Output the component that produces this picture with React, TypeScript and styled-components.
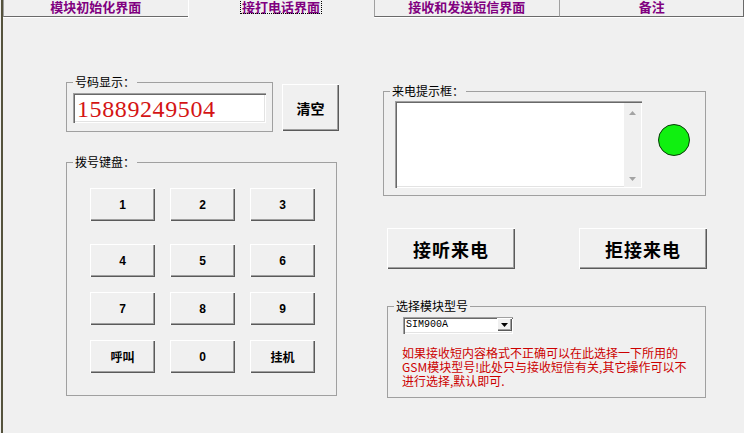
import styled, { createGlobalStyle } from "styled-components";

const tabs = [
  { id: 1, label: "模块初始化界面", width: 185 },
  { id: 2, label: "接打电话界面", width: 186, active: true },
  { id: 3, label: "接收和发送短信界面", width: 186 },
  { id: 4, label: "备注", width: 184 },
];

const keyRows = [
  { gap: 0, keys: ["1", "2", "3"] },
  { gap: 23, keys: ["4", "5", "6"] },
  { gap: 15, keys: ["7", "8", "9"] },
  { gap: 15, keys: ["呼叫", "0", "挂机"] },
];

const noteLines = [
  "如果接收短内容格式不正确可以在此选择一下所用的",
  "GSM模块型号!此处只与接收短信有关,其它操作可以不",
  "进行选择,默认即可.",
];

const App = () => {
  return (
    <>
      <GlobalStyle />
      <Page>
        <TabBar>
          {tabs.map((tab) => (
            <Tab key={tab.id} $width={tab.width} $active={!!tab.active}>
              <TabLabel $active={!!tab.active}>{tab.label}</TabLabel>
            </Tab>
          ))}
        </TabBar>
        <Panel>
          <LeftColumn>
            <NumberRow>
              <Group $width={207}>
                <Legend>号码显示：</Legend>
                <GroupBody $pad="4px 0 8px 6px">
                  <NumberField>15889249504</NumberField>
                </GroupBody>
              </Group>
              <ClearButton>清空</ClearButton>
            </NumberRow>
            <Group $width={271} $top={23}>
              <Legend>拨号键盘：</Legend>
              <GroupBody $pad="19px 0 22px 23px">
                {keyRows.map((row, i) => (
                  <KeyRow key={i} $gap={row.gap}>
                    {row.keys.map((k) => (
                      <KeyButton key={k}>{k}</KeyButton>
                    ))}
                  </KeyRow>
                ))}
              </GroupBody>
            </Group>
          </LeftColumn>
          <RightColumn>
            <Group $width={323}>
              <Legend>来电提示框：</Legend>
              <GroupBody $pad="3px 0 7px 11px">
                <CallerRow>
                  <CallerBox>
                    <CallerText />
                    <ScrollTrack>
                      <Arrow viewBox="0 0 7 4">
                        <path d="M0 4 L3.5 0 L7 4 Z" />
                      </Arrow>
                      <Arrow viewBox="0 0 7 4">
                        <path d="M0 0 L3.5 4 L7 0 Z" />
                      </Arrow>
                    </ScrollTrack>
                  </CallerBox>
                  <StatusLamp />
                </CallerRow>
              </GroupBody>
            </Group>
            <CallButtons>
              <CallButton>接听来电</CallButton>
              <CallButton>拒接来电</CallButton>
            </CallButtons>
            <Group $width={319} $top={30} $left={4}>
              <Legend>选择模块型号</Legend>
              <GroupBody $pad="4px 0 9px 15px">
                <ModelSelect>
                  <SelectValue>SIM900A</SelectValue>
                  <DropButton>
                    <svg width="7" height="4" viewBox="0 0 7 4">
                      <path d="M0 0 L3.5 4 L7 0 Z" fill="#000" />
                    </svg>
                  </DropButton>
                </ModelSelect>
                <Note>
                  {noteLines.map((line) => (
                    <NoteLine key={line}>{line}</NoteLine>
                  ))}
                </Note>
              </GroupBody>
            </Group>
          </RightColumn>
        </Panel>
      </Page>
    </>
  );
};

export default App;

// Styled Components
const GlobalStyle = createGlobalStyle`
  html, body {
    margin: 0;
    padding: 0;
    background: #f0f0f0;
  }
`;

const cjk = `"Noto Sans CJK SC", "Noto Sans", sans-serif`;

const Page = styled.div`
  width: 743px;
  height: 433px;
  margin-left: 1px;
  box-sizing: border-box;
  border-left: 2px solid #55533d;
  background: #f0f0f0;
  display: flex;
  flex-direction: column;
  overflow: hidden;
  font-family: ${cjk};
  color: #000;
`;

const TabBar = styled.div`
  display: flex;
  height: 17px;
  padding-left: 1px;
`;

const Tab = styled.div<{ $width: number; $active: boolean }>`
  width: ${(p) => p.$width}px;
  height: ${(p) => (p.$active ? 17 : 16)}px;
  box-sizing: content-box;
  display: flex;
  justify-content: center;
  align-items: flex-start;
  border-left: 1px solid ${(p) => (p.$active ? "#ffffff" : "#a0a0a0")};
  border-right: 1px solid #6a6a6a;
  border-bottom: ${(p) => (p.$active ? "none" : "1px solid #6a6a6a")};
  box-shadow: ${(p) => (p.$active ? "none" : "0 1px 0 #ffffff")};
  margin-left: -1px;
  background: #f0f0f0;
`;

const TabLabel = styled.span<{ $active: boolean }>`
  font-size: 13px;
  line-height: 13px;
  font-weight: 700;
  color: #800080;
  padding: 0 1px;
  outline: ${(p) => (p.$active ? "1px dotted #000" : "none")};
  outline-offset: 0;
`;

const Panel = styled.div`
  display: flex;
  padding-left: 63px;
  gap: 44px;
`;

const LeftColumn = styled.div`
  display: flex;
  flex-direction: column;
  padding-top: 58px;
`;

const RightColumn = styled.div`
  display: flex;
  flex-direction: column;
  padding-top: 67px;
`;

const NumberRow = styled.div`
  display: flex;
  align-items: flex-start;
  gap: 9px;
`;

const Group = styled.fieldset<{ $width: number; $top?: number; $left?: number }>`
  margin: ${(p) => p.$top ?? 0}px 0 0 ${(p) => p.$left ?? 0}px;
  padding: 0;
  min-width: 0;
  width: ${(p) => p.$width}px;
  box-sizing: border-box;
  border: 1px solid #a0a0a0;
`;

const Legend = styled.legend`
  margin-left: 6px;
  padding: 0 2px;
  font-size: 12px;
  line-height: 14px;
  height: 14px;
  font-family: ${cjk};
  color: #000;
`;

const GroupBody = styled.div<{ $pad: string }>`
  padding: ${(p) => p.$pad};
`;

const sunken = `
  box-shadow: inset 1px 1px 0 #a0a0a0, inset 2px 2px 0 #696969,
    inset -1px -1px 0 #ffffff, inset -2px -2px 0 #e3e3e3;
`;

const raised = `
  background: #f0f0f0;
  border: none;
  box-shadow: inset 1px 1px 0 #ffffff, inset -1px -1px 0 #5a5a5a,
    inset -2px -2px 0 #a0a0a0;
  cursor: pointer;
  padding: 0;
  color: #000;
`;

const NumberField = styled.div`
  width: 193px;
  height: 30px;
  box-sizing: border-box;
  background: #ffffff;
  ${sunken}
  padding: 2px 0 0 4px;
  font-family: "Liberation Serif", serif;
  font-size: 24px;
  line-height: 28px;
  letter-spacing: 0.6px;
  color: #d41414;
`;

const ClearButton = styled.button`
  ${raised}
  margin-top: 9px;
  width: 57px;
  height: 47px;
  font-family: ${cjk};
  font-size: 14px;
  font-weight: 700;
`;

const KeyRow = styled.div<{ $gap: number }>`
  display: flex;
  gap: 15px;
  margin-top: ${(p) => p.$gap}px;
`;

const KeyButton = styled.button`
  ${raised}
  width: 65px;
  height: 33px;
  font-family: "Liberation Sans", ${cjk};
  font-size: 12px;
  font-weight: 700;
`;

const CallerRow = styled.div`
  display: flex;
  align-items: flex-start;
  gap: 16px;
`;

const CallerBox = styled.div`
  width: 247px;
  height: 87px;
  box-sizing: border-box;
  display: flex;
  background: #ffffff;
  ${sunken}
  padding: 2px 1px 1px 2px;
`;

const CallerText = styled.div`
  flex: 1;
`;

const ScrollTrack = styled.div`
  width: 17px;
  background: #f0f0f0;
  display: flex;
  flex-direction: column;
  justify-content: space-between;
  align-items: center;
  padding: 8px 0 6px;
`;

const Arrow = styled.svg`
  width: 7px;
  height: 4px;
  fill: #a3a3a3;
`;

const StatusLamp = styled.div`
  width: 32px;
  height: 32px;
  box-sizing: border-box;
  margin-top: 23px;
  border-radius: 50%;
  background: #10f010;
  border: 1px solid #0b3a0b;
`;

const CallButtons = styled.div`
  display: flex;
  justify-content: space-between;
  margin-top: 32px;
  padding-left: 4px;
  width: 324px;
  box-sizing: border-box;
`;

const CallButton = styled.button`
  ${raised}
  width: 128px;
  height: 41px;
  font-family: ${cjk};
  font-size: 18px;
  font-weight: 700;
  letter-spacing: 1px;
`;

const ModelSelect = styled.div`
  width: 110px;
  height: 17px;
  box-sizing: border-box;
  display: flex;
  background: #ffffff;
  ${sunken}
  padding: 2px 1px 1px 2px;
`;

const SelectValue = styled.div`
  flex: 1;
  font-family: "Liberation Mono", monospace;
  font-size: 10px;
  line-height: 12px;
  padding-left: 1px;
`;

const DropButton = styled.div`
  ${raised}
  width: 15px;
  height: 13px;
  margin-top: -1px;
  display: flex;
  align-items: center;
  justify-content: center;
`;

const Note = styled.div`
  margin: 12px 0 0 -1px;
  display: flex;
  flex-direction: column;
  font-family: ${cjk};
  font-size: 12px;
  color: #cc0000;
`;

const NoteLine = styled.div`
  height: 14px;
  line-height: 14px;
  white-space: nowrap;
`;
